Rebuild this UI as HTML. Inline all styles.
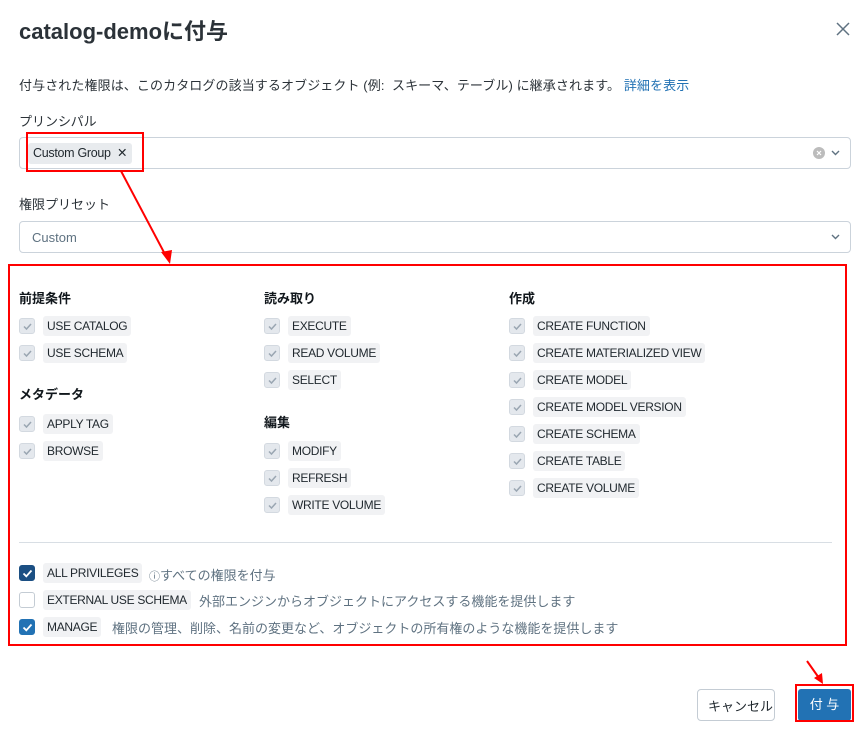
<!DOCTYPE html>
<html><head><meta charset="utf-8"><style>
*{margin:0;padding:0;box-sizing:border-box}
body{width:862px;height:742px;background:#fff;position:relative;overflow:hidden;font-family:"Liberation Sans","Noto Sans CJK JP",sans-serif;color:#1f272d}
.a{position:absolute;white-space:nowrap}
.h{font-size:13px;font-weight:bold;color:#11171c}
.cb{position:absolute;width:16px;height:16px;border-radius:3px;background:#e4e8ed;border:1px solid #d3d9e0}
.cb svg{position:absolute;left:2px;top:2px}
.chip{position:absolute;height:20px;line-height:20px;padding:0 4px;background:#f1f2f4;border-radius:3px;font-size:12px;color:#1f272d;letter-spacing:-0.3px;white-space:nowrap}
.d{position:absolute;font-size:13px;color:#5f7281;white-space:nowrap}
.box{position:absolute;border:1px solid #cbd3db;border-radius:4px;background:#fff}
</style></head><body>
<div class="a" style="left:19px;top:14px;font-size:22px;font-weight:bold;color:#2b3238">catalog-demoに付与</div>
<svg class="a" style="left:836px;top:22px" width="14" height="14" viewBox="0 0 14 14"><path d="M1 1L13 13M13 1L1 13" stroke="#5f7281" stroke-width="1.5"/></svg>
<div class="a" style="left:19px;top:75px;font-size:13px;color:#2b3238;letter-spacing:0.1px">付与された権限は、このカタログの該当するオブジェクト (例:&nbsp;&nbsp;スキーマ、テーブル) に継承されます。 <span style="color:#2272b4">詳細を表示</span></div>
<div class="a" style="left:19px;top:111px;font-size:13px;color:#2b3238">プリンシパル</div>
<div class="box" style="left:19px;top:137px;width:832px;height:32px"></div>
<div class="chip" style="left:28px;top:143px;height:21px;line-height:21px;font-size:12.5px;padding:0 5px;background:#e8ebee">Custom Group&nbsp; ✕</div>
<div class="a" style="left:813px;top:147px;width:12px;height:12px;border-radius:6px;background:#bcbcbc"></div>
<svg class="a" style="left:816px;top:150px" width="6" height="6"><path d="M1 1L5 5M5 1L1 5" stroke="#fff" stroke-width="1.2"/></svg>
<svg class="a" style="left:831px;top:150px" width="9" height="6"><path d="M1 1L4.5 4.5L8 1" stroke="#5f7281" stroke-width="1.4" fill="none"/></svg>
<div class="a" style="left:19px;top:194px;font-size:13px;color:#2b3238">権限プリセット</div>
<div class="box" style="left:19px;top:221px;width:832px;height:32px"></div>
<div class="a" style="left:32px;top:230px;font-size:13px;color:#5f7281">Custom</div>
<svg class="a" style="left:831px;top:234px" width="9" height="6"><path d="M1 1L4.5 4.5L8 1" stroke="#5f7281" stroke-width="1.4" fill="none"/></svg>

<div class="a h" style="left:19px;top:288px">前提条件</div>
<div class="a h" style="left:264px;top:288px">読み取り</div>
<div class="a h" style="left:509px;top:288px">作成</div>
<div class="a h" style="left:19px;top:384px">メタデータ</div>
<div class="a h" style="left:264px;top:412px">編集</div>

<div id="items"></div>
<div class="a" style="left:19px;top:542px;width:813px;height:1px;background:#d8dee4"></div>

<div class="cb" style="left:19px;top:565px;background:#1b4f83;border-color:#1b4f83"><svg width="11" height="11" viewBox="0 0 11 11"><path d="M1.5 5.5L4.3 8.3L9.5 2.5" stroke="#fff" stroke-width="1.8" fill="none"/></svg></div>
<div class="chip" style="left:43px;top:563px">ALL PRIVILEGES</div>
<div class="d" style="left:149px;top:565px"><span style="font-size:11px">ⓘ</span>すべての権限を付与</div>
<div class="cb" style="left:19px;top:592px;background:#fff;border-color:#c4ccd4"></div>
<div class="chip" style="left:43px;top:590px">EXTERNAL USE SCHEMA</div>
<div class="d" style="left:199px;top:591px">外部エンジンからオブジェクトにアクセスする機能を提供します</div>
<div class="cb" style="left:19px;top:619px;background:#2272b4;border-color:#2272b4"><svg width="11" height="11" viewBox="0 0 11 11"><path d="M1.5 5.5L4.3 8.3L9.5 2.5" stroke="#fff" stroke-width="1.8" fill="none"/></svg></div>
<div class="chip" style="left:43px;top:617px">MANAGE</div>
<div class="d" style="left:112px;top:618px">権限の管理、削除、名前の変更など、オブジェクトの所有権のような機能を提供します</div>

<div class="box" style="left:697px;top:689px;width:78px;height:32px;border-color:#c4ccd4"></div>
<div class="a" style="left:708px;top:696px;font-size:13px">キャンセル</div>
<div class="a" style="left:798px;top:689px;width:53px;height:32px;background:#2272b4;border-radius:3px;color:#fff;font-size:13px;text-align:center;line-height:32px">付 与</div>

<div class="a" style="left:26px;top:132px;width:118px;height:40px;border:2px solid #f00"></div>
<div class="a" style="left:8px;top:264px;width:839px;height:382px;border:2px solid #f00"></div>
<div class="a" style="left:795px;top:684px;width:59px;height:38px;border:2px solid #f00"></div>
<svg class="a" style="left:0;top:0" width="862" height="742"><path d="M121 171L167 258" stroke="#f00" stroke-width="2"/><path d="M170 264L161 252L172 250Z" fill="#f00"/><path d="M807 661L819 678" stroke="#f00" stroke-width="2"/><path d="M823 684L814 678L822 673Z" fill="#f00"/></svg>

<script>
var chk='<svg width="11" height="11" viewBox="0 0 11 11"><path d="M2 5.5L4.5 8L9 3" stroke="#9aa6b2" stroke-width="1.5" fill="none"/></svg>';
var cols=[[19,[[326,"USE CATALOG"],[353,"USE SCHEMA"],[424,"APPLY TAG"],[451,"BROWSE"]]],
[264,[[326,"EXECUTE"],[353,"READ VOLUME"],[380,"SELECT"],[451,"MODIFY"],[478,"REFRESH"],[505,"WRITE VOLUME"]]],
[509,[[326,"CREATE FUNCTION"],[353,"CREATE MATERIALIZED VIEW"],[380,"CREATE MODEL"],[407,"CREATE MODEL VERSION"],[434,"CREATE SCHEMA"],[461,"CREATE TABLE"],[488,"CREATE VOLUME"]]]];
var h='';cols.forEach(function(c){c[1].forEach(function(r){h+='<div class="cb" style="left:'+c[0]+'px;top:'+(r[0]-8)+'px">'+chk+'</div><div class="chip" style="left:'+(c[0]+24)+'px;top:'+(r[0]-10)+'px">'+r[1]+'</div>';});});
document.getElementById('items').innerHTML=h;
</script>
</body></html>
